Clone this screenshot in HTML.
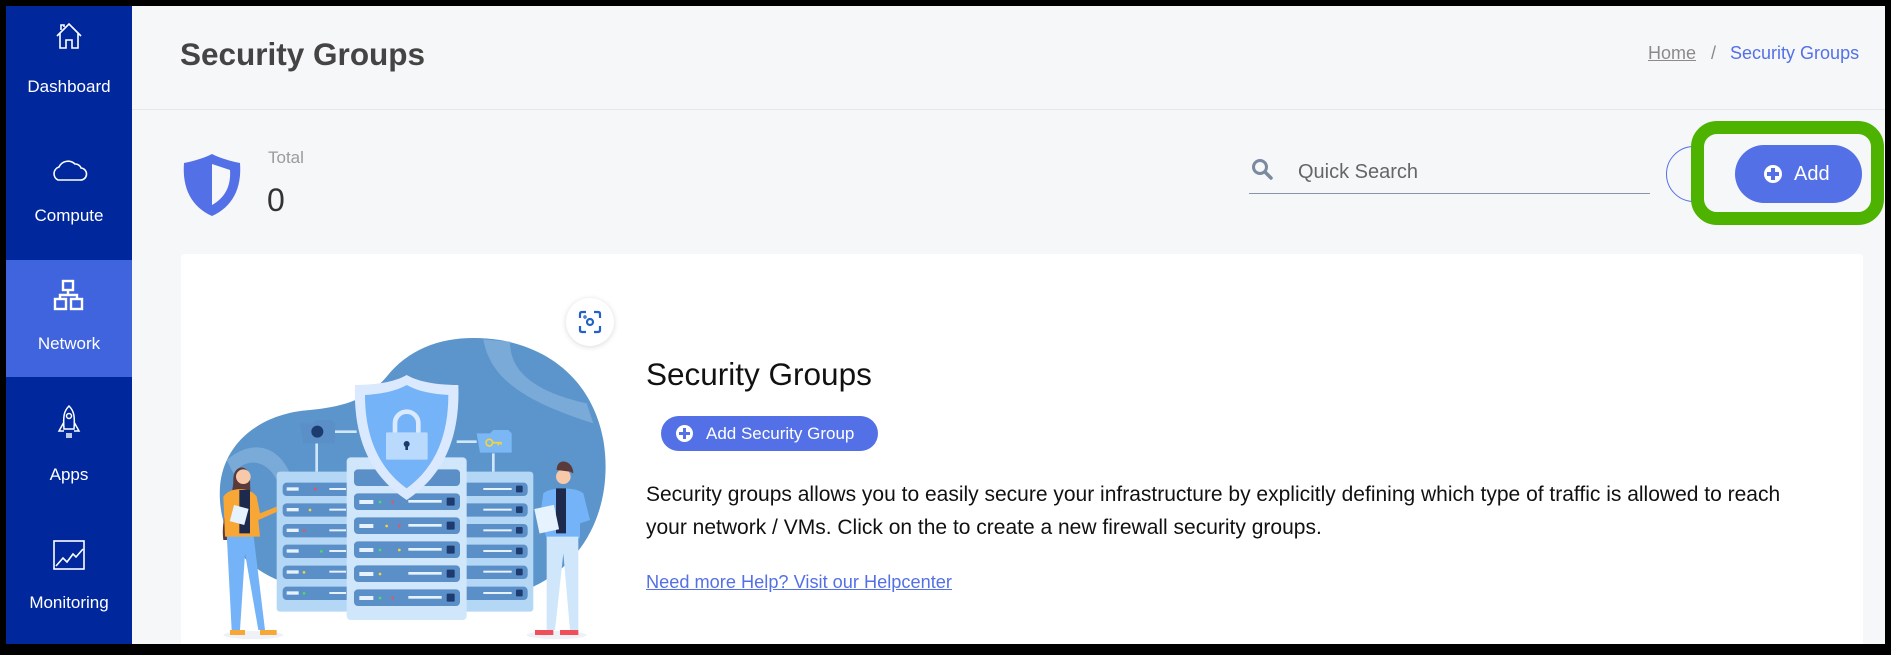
<!DOCTYPE html>
<html><head><meta charset="utf-8"><style>
*{margin:0;padding:0;box-sizing:border-box}
html,body{width:1891px;height:655px;overflow:hidden;background:#000;font-family:"Liberation Sans",Arial,sans-serif}
#frame{position:absolute;left:6px;top:6px;width:1879px;height:638px;background:#f6f7f9;overflow:hidden}
.side{position:absolute;left:0;top:0;width:126px;height:638px;background:#00289c}
.active{position:absolute;left:0;top:254px;width:126px;height:117px;background:#3f64dd}
.ic{position:absolute}
.lbl{position:absolute;left:0;width:126px;text-align:center;color:#fff;font-size:17px;line-height:20px}
.hdrline{position:absolute;left:126px;right:0;top:103px;height:1px;background:#e6e7ea}
.abs{position:absolute;white-space:nowrap}
</style></head><body>
<div id="frame">
<div class="side">
 <div class="active"></div>
 <svg class="ic" style="left:48px;top:15px" width="30" height="30" viewBox="0 0 30 30" fill="none" stroke="#fff" stroke-width="1.6"><path d="M3 15 L15 3 L27 15 M6 12 V27 H12 V19 H18 V27 H24 V12 M7 9 V4 H10 V6"/></svg>
 <div class="lbl" style="top:71px">Dashboard</div>
 <svg class="ic" style="left:44px;top:150px" width="38" height="26" viewBox="0 0 38 26" fill="none" stroke="#fff" stroke-width="1.6"><path d="M8 24 H30 A6 6 0 0 0 31 12 A6 6 0 0 0 25 8 A10 10 0 0 0 9 11 A7 7 0 0 0 8 24 Z"/></svg>
 <div class="lbl" style="top:200px">Compute</div>
 <svg class="ic" style="left:46px;top:273px" width="34" height="32" viewBox="0 0 34 32" fill="none" stroke="#fff" stroke-width="2.4"><rect x="11" y="2" width="10" height="9"/><rect x="3" y="20" width="11" height="10"/><rect x="19" y="20" width="11" height="10"/><path d="M16 11 V16 M8 20 V16 H25 V20"/></svg>
 <div class="lbl" style="top:328px">Network</div>
 <svg class="ic" style="left:51px;top:398px" width="24" height="36" viewBox="0 0 24 36" fill="none" stroke="#fff" stroke-width="1.5"><path d="M12 2 C7 7 6 12 7 25 H17 C18 12 17 7 12 2 Z M7 18 L2 27 H7 M17 18 L22 27 H17 M10 29 V34 M12 29 V34 M14 29 V34"/><circle cx="12" cy="12" r="2.5"/></svg>
 <div class="lbl" style="top:459px">Apps</div>
 <svg class="ic" style="left:47px;top:534px" width="32" height="30" viewBox="0 0 32 30" fill="none" stroke="#fff" stroke-width="1.6"><rect x="1" y="1" width="30" height="28"/><path d="M3 26 L10 18 L14 22 L20 14 L23 17 L30 9"/></svg>
 <div class="lbl" style="top:587px">Monitoring</div>
</div>
<div class="hdrline"></div>
<div class="abs" style="left:174px;top:30px;font-size:31.5px;font-weight:bold;color:#444">Security Groups</div>
<div class="abs" style="left:1642px;top:37px;font-size:18px;color:#8a8a8a"><span style="text-decoration:underline">Home</span><span style="margin:0 14px 0 15px">/</span><span style="color:#5470e6">Security Groups</span></div>

<svg class="abs" style="left:176px;top:147px" width="60" height="64" viewBox="0 0 60 64"><path d="M30 1 C22 5 12 8 2 10 C0 36 10 54 30 63 C50 54 60 36 58 10 C48 8 38 5 30 1 Z" fill="#5470e6"/><path d="M30 11 V52 C44 44 49 32 48 17 C42 15 36 13 30 11 Z" fill="#f6f7f9"/></svg>
<div class="abs" style="left:262px;top:142px;font-size:17px;color:#9b9b9b">Total</div>
<div class="abs" style="left:261px;top:176px;font-size:32px;color:#333">0</div>

<svg class="abs" style="left:1245px;top:152px" width="24" height="24" viewBox="0 0 24 24"><circle cx="9" cy="9" r="6.5" fill="none" stroke="#7b8aa0" stroke-width="3"/><path d="M14 14 L20 20" stroke="#7b8aa0" stroke-width="3.5" stroke-linecap="round"/></svg>
<div class="abs" style="left:1292px;top:155px;font-size:20px;color:#666">Quick Search</div>
<div class="abs" style="left:1243px;top:187px;width:401px;height:1px;background:#8a96a8"></div>
<div class="abs" style="left:1660px;top:140px;width:56px;height:56px;border:1px solid #5470e6;border-radius:50%"></div>
<div class="abs" style="left:1687px;top:159px;width:12px;height:20px;border:3px solid #5470e6;border-right:none;border-radius:10px 0 0 10px"></div>
<div class="abs" style="left:1685px;top:115px;width:193px;height:104px;border:13px solid #4db300;border-radius:26px;background:#f6f7f9"></div>
<div class="abs" style="left:1729px;top:139px;width:127px;height:58px;background:#5470e6;border-radius:29px;color:#fff;font-size:20px;line-height:58px"><span style="position:absolute;left:29px;top:20px;width:18px;height:18px;border-radius:50%;background:#fff"></span><span style="position:absolute;left:36px;top:23px;width:4px;height:12px;background:#5470e6"></span><span style="position:absolute;left:32px;top:27px;width:12px;height:4px;background:#5470e6"></span><span style="position:absolute;left:59px">Add</span></div>

<div class="abs" style="left:175px;top:248px;width:1682px;height:400px;background:#fff;border-radius:4px"></div>

<svg class="abs" style="left:194px;top:294px" width="420" height="350" viewBox="0 0 1260 1050">
 <path d="M560 230 C640 130 760 100 900 120 C1070 150 1180 260 1210 420 C1240 600 1170 780 1000 860 L300 860 C150 830 50 720 60 560 C70 430 180 340 330 330 C430 320 500 300 560 230 Z" fill="#5b95cb"/>
 <path d="M850 118 C870 230 960 300 1180 370 L1160 310 C980 270 930 200 930 125 Z" fill="#7aaad7"/>
 <path d="M80 480 C150 420 230 430 270 520 L230 540 C200 480 140 470 100 520 Z" fill="#7aaad7"/>
 <rect x="230" y="515" width="770" height="420" rx="10" fill="#b5d7f6"/>
 <g fill="#5b8fc7">
  <rect x="248" y="548" width="735" height="40" rx="12"/><rect x="248" y="610" width="735" height="40" rx="12"/><rect x="248" y="672" width="735" height="40" rx="12"/><rect x="248" y="734" width="735" height="40" rx="12"/><rect x="248" y="797" width="735" height="40" rx="12"/><rect x="248" y="860" width="735" height="40" rx="12"/>
 </g>
 <rect x="440" y="472" width="360" height="488" rx="12" fill="#cfe6fb"/>
 <g fill="#5b8fc7">
  <rect x="462" y="508" width="318" height="50" rx="12"/><rect x="462" y="580" width="318" height="50" rx="12"/><rect x="462" y="652" width="318" height="50" rx="12"/><rect x="462" y="724" width="318" height="50" rx="12"/><rect x="462" y="796" width="318" height="50" rx="12"/><rect x="462" y="868" width="318" height="50" rx="12"/>
 </g>
 <g fill="#e6f2fd"><rect x="625" y="600" width="100" height="8"/><rect x="625" y="672" width="100" height="8"/><rect x="625" y="744" width="100" height="8"/><rect x="625" y="816" width="100" height="8"/><rect x="625" y="888" width="100" height="8"/><rect x="388" y="564" width="50" height="6"/><rect x="388" y="626" width="50" height="6"/><rect x="388" y="688" width="50" height="6"/><rect x="388" y="750" width="50" height="6"/><rect x="388" y="812" width="50" height="6"/><rect x="388" y="876" width="50" height="6"/><rect x="850" y="564" width="85" height="6"/><rect x="850" y="626" width="85" height="6"/><rect x="850" y="688" width="85" height="6"/><rect x="850" y="750" width="85" height="6"/><rect x="850" y="812" width="85" height="6"/><rect x="850" y="876" width="85" height="6"/></g>
 <g fill="#1d3b6e"><rect x="740" y="593" width="24" height="24" rx="3"/><rect x="740" y="665" width="24" height="24" rx="3"/><rect x="740" y="737" width="24" height="24" rx="3"/><rect x="740" y="809" width="24" height="24" rx="3"/><rect x="740" y="881" width="24" height="24" rx="3"/><rect x="948" y="557" width="20" height="20" rx="3"/><rect x="948" y="619" width="20" height="20" rx="3"/><rect x="948" y="681" width="20" height="20" rx="3"/><rect x="948" y="743" width="20" height="20" rx="3"/><rect x="948" y="806" width="20" height="20" rx="3"/><rect x="948" y="869" width="20" height="20" rx="3"/></g>
 <g fill="#e6f2fd"><path d="M260 562 H296 V572 H260 Z"/><path d="M260 624 H296 V634 H260 Z"/><path d="M260 686 H296 V696 H260 Z"/><path d="M260 748 H296 V758 H260 Z"/><path d="M260 811 H296 V821 H260 Z"/><path d="M260 874 H296 V884 H260 Z"/><path d="M478 600 H520 V612 H478 Z"/><path d="M478 672 H520 V684 H478 Z"/><path d="M478 744 H520 V756 H478 Z"/><path d="M478 816 H520 V828 H478 Z"/><path d="M478 888 H520 V900 H478 Z"/></g>
 <g fill="#f5d33a"><circle cx="330" cy="630" r="4"/><circle cx="560" cy="678" r="4"/><circle cx="598" cy="750" r="4"/><circle cx="540" cy="822" r="4"/><circle cx="312" cy="817" r="4"/></g>
 <g fill="#4ade60"><circle cx="540" cy="606" r="4"/><circle cx="540" cy="750" r="4"/><circle cx="540" cy="894" r="4"/><circle cx="312" cy="880" r="4"/><circle cx="364" cy="754" r="4"/></g>
 <g fill="#f0505a"><circle cx="578" cy="606" r="4"/><circle cx="598" cy="678" r="4"/><circle cx="578" cy="894" r="4"/><circle cx="346" cy="567" r="4"/><circle cx="312" cy="692" r="4"/></g>
 <path d="M350 515 V430 M405 395 H470 M770 425 H830 M880 460 V515" stroke="#cfe6fb" stroke-width="8"/>
 <path d="M300 370 H340 L350 360 H395 L405 370 V430 H310 Z" fill="#5b8fc7"/><circle cx="352" cy="395" r="18" fill="#1d3b6e"/>
 <path d="M830 400 H870 L880 390 H925 L935 400 V458 H840 Z" fill="#7bb7f5"/><circle cx="868" cy="428" r="10" fill="none" stroke="#f5d33a" stroke-width="5"/><path d="M878 428 H905 M895 428 V436 M903 428 V434" stroke="#f5d33a" stroke-width="5"/>
 <path d="M620 225 C580 248 520 255 465 255 C460 400 500 520 620 600 C740 520 780 400 775 255 C720 255 660 248 620 225 Z" fill="#dbe9ff"/>
 <path d="M620 255 C585 275 540 282 495 285 C495 400 530 500 620 565 C710 500 745 400 745 285 C700 282 655 275 620 255 Z" fill="#74b3f7"/>
 <path d="M585 400 V370 A35 35 0 0 1 655 370 V400" fill="none" stroke="#dbe9ff" stroke-width="14"/>
 <rect x="558" y="397" width="125" height="82" rx="4" fill="#b9dafc"/><circle cx="620" cy="432" r="9" fill="#1d3b6e"/><rect x="616" y="432" width="8" height="18" fill="#1d3b6e"/>
 <ellipse cx="160" cy="1005" rx="90" ry="12" fill="#eef1f5"/><ellipse cx="1070" cy="1005" rx="90" ry="12" fill="#eef1f5"/>
 <path d="M100 540 C100 490 150 490 150 540 L155 720 H70 C60 640 100 600 100 540 Z" fill="#5a3a3a"/>
 <circle cx="130" cy="530" r="22" fill="#f7c9a8"/>
 <path d="M80 700 H160 L195 990 H175 L135 760 L120 990 H95 Z" fill="#74b3f7"/>
 <path d="M70 590 C90 560 150 560 170 590 L180 640 L230 620 L232 635 L175 660 L180 710 H75 Z" fill="#f8a737"/>
 <path d="M118 570 H150 V700 H118 Z" fill="#1d2a4e"/>
 <rect x="95" y="620" width="45" height="50" fill="#e6f2fd" transform="rotate(15 118 645)"/>
 <path d="M90 990 H135 V1005 H90 Z M180 990 H230 V1005 H180 Z" fill="#f8a737"/>
 <circle cx="1090" cy="530" r="22" fill="#f7c9a8"/><path d="M1070 510 C1070 470 1120 480 1120 520 L1110 515 Z" fill="#5a3a3a"/>
 <path d="M1030 580 C1050 560 1130 560 1150 580 L1170 660 L1140 670 L1140 715 H1040 L1020 650 Z" fill="#74b3f7"/>
 <path d="M1068 565 H1098 V700 H1068 Z" fill="#1d2a4e"/>
 <path d="M1040 710 H1135 L1135 990 H1110 L1090 760 L1065 990 H1040 Z" fill="#cfe6fb"/>
 <rect x="1010" y="620" width="60" height="75" fill="#e6f2fd" transform="rotate(-12 1040 657)"/>
 <path d="M1005 990 H1060 V1005 H1005 Z M1080 990 H1135 V1005 H1080 Z" fill="#f0505a"/>
</svg>
<div class="abs" style="left:560px;top:292px;width:48px;height:48px;border-radius:50%;background:#fff;box-shadow:0 1px 6px rgba(0,0,0,.15)"></div>
<svg class="abs" style="left:572px;top:304px" width="24" height="24" viewBox="0 0 24 24" fill="none" stroke="#2460c8" stroke-width="2.2"><path d="M2 8 V4 Q2 2 4 2 H8 M16 2 H20 Q22 2 22 4 V8 M22 16 V20 Q22 22 20 22 H16 M8 22 H4 Q2 22 2 20 V16"/><circle cx="12" cy="12" r="3"/><circle cx="7" cy="7" r=".6"/></svg>

<div class="abs" style="left:640px;top:350px;font-size:31.5px;color:#111">Security Groups</div>
<div class="abs" style="left:655px;top:410px;width:217px;height:35px;border-radius:18px;background:#5470e6;color:#fff;font-size:17px;line-height:35px"><span style="position:absolute;left:15px;top:9px;width:17px;height:17px;border-radius:50%;background:#fff"></span><span style="position:absolute;left:22px;top:12px;width:3px;height:11px;background:#5470e6"></span><span style="position:absolute;left:18px;top:16px;width:11px;height:3px;background:#5470e6"></span><span style="position:absolute;left:45px">Add Security Group</span></div>
<div class="abs" style="left:640px;top:472px;font-size:21px;line-height:33px;color:#111">Security groups allows you to easily secure your infrastructure by explicitly defining which type of traffic is allowed to reach<br>your network / VMs. Click on the to create a new firewall security groups.</div>
<div class="abs" style="left:640px;top:566px;font-size:18.2px;color:#5470e6;text-decoration:underline">Need more Help? Visit our Helpcenter</div>
</div>
</body></html>
